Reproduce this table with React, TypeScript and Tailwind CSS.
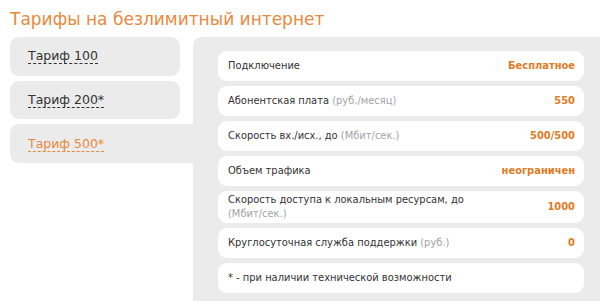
import React from "react";

const rows: { label: string; hint?: string; value?: string; two?: boolean }[] = [
  { label: "Подключение", value: "Бесплатное" },
  { label: "Абонентская плата", hint: "(руб./месяц)", value: "550" },
  { label: "Скорость вх./исх., до", hint: "(Мбит/сек.)", value: "500/500" },
  { label: "Объем трафика", value: "неограничен" },
  { label: "Скорость доступа к локальным ресурсам, до", hint: "(Мбит/сек.)", value: "1000", two: true },
  { label: "Круглосуточная служба поддержки", hint: "(руб.)", value: "0" },
  { label: "* - при наличии технической возможности" },
];

export default function App() {
  return (
    <div className="w-[600px] h-[301px] bg-white overflow-hidden text-[#333]" style={{ fontFamily: '"DejaVu Sans", Verdana, sans-serif' }}>
      <div className="pl-[10px] pt-[7px] h-[37px] text-[17px] leading-[24px] text-[#e8893d]">
        Тарифы на безлимитный интернет
      </div>
      <div className="flex h-[264px]">
        <div className="flex flex-col gap-[5px] pl-[10px] w-[193px] shrink-0">
          <div className="w-[170px] h-[39px] bg-[#ebebeb] rounded-[9px] pl-[18px] pt-[11px] text-[12.5px] leading-[16px]">
            <span className="border-b border-dashed border-[#333]">Тариф 100</span>
          </div>
          <div className="w-[170px] h-[38px] bg-[#ebebeb] rounded-[9px] pl-[18px] pt-[11px] text-[12.5px] leading-[16px]">
            <span className="border-b border-dashed border-[#333]">Тариф 200*</span>
          </div>
          <div className="w-[183px] h-[39px] bg-[#ebebeb] rounded-l-[9px] pl-[18px] pt-[12px] text-[12.5px] leading-[16px] text-[#e8893d]">
            <span className="border-b border-dashed border-[#e8893d]">Тариф 500*</span>
          </div>
        </div>
        <div className="flex-1 bg-[#ebebeb] rounded-tl-[9px] pt-[14px] pl-[25px] pr-[16px] flex flex-col gap-[5px]">
          {rows.map((r, i) => (
            <div
              key={i}
              className={`bg-white rounded-[9px] flex items-center justify-between pl-[10px] pr-[9px] text-[11px] leading-[14px] ${r.two ? "h-[32px]" : "h-[30px]"}`}
              style={{ fontFamily: '"DejaVu Sans Condensed", "DejaVu Sans", sans-serif' }}
            >
              <div className={r.two ? "w-[260px]" : ""}>
                {r.label}
                {r.hint && <span className="text-[#a3a3a3]"> {r.hint}</span>}
              </div>
              {r.value && <div className="font-bold text-[#e07b24]">{r.value}</div>}
            </div>
          ))}
        </div>
      </div>
    </div>
  );
}
